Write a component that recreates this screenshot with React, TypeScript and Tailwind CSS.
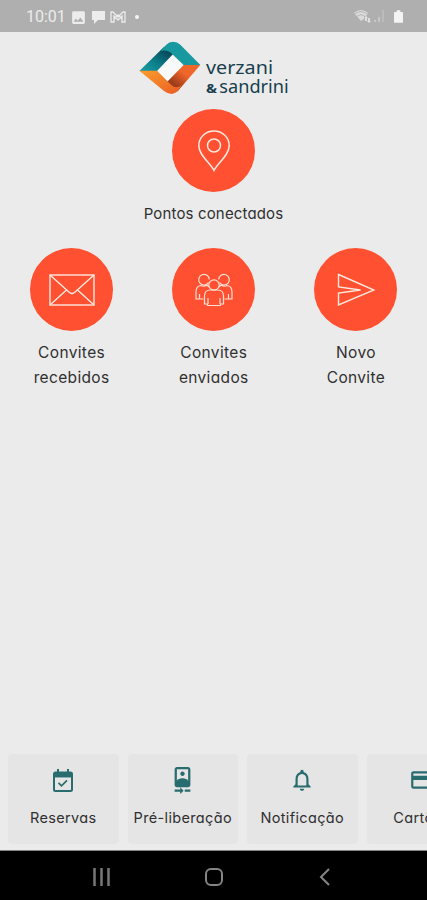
import React from "react";
import { MdImage, MdCameraFront, MdNotificationsNone, MdCreditCard } from "react-icons/md";

const PinIcon = () => (
  <svg width="32" height="42" viewBox="0 0 32 42" fill="none" stroke="#ffe9df" strokeWidth="1.500">
    <path d="M16 40.500C12.500 33 .8 25.500 .8 15.500a15.200 14.500 0 0 1 30.400 0C31.200 25.500 19.500 33 16 40.500Z" />
    <circle cx="16" cy="15.500" r="6.500" />
  </svg>
);

const MailIcon = () => (
  <svg width="46" height="32" viewBox="0 0 46 32" fill="none" stroke="#ffe9df" strokeWidth="1.400">
    <rect x="1" y="1" width="44" height="30" />
    <path d="M1 1l19.500 17.500q2.500 2 5 0L45 1M1 31l16.500-15M45 31L28.500 16" />
  </svg>
);

const PeopleIcon = () => (
  <svg width="38" height="34" viewBox="0 0 38 34" fill="none" stroke="#ffe0d4" strokeWidth="1.200">
    <path d="M13.500 9.500A5.300 5.300 0 1 1 14.300 6.500M24.500 9.500A5.300 5.300 0 1 0 23.700 6.500" />
    <circle cx="19" cy="12" r="5.200" />
    <path d="M9.500 31V23q0-6 6-6h7q6 0 6 6v8h-3v1.500h-13V31Z" />
    <path d="M8.500 26H1v-7q0-6 5-6.500 3 1.500 6-.5l2 2M29.500 26H37v-7q0-6-5-6.500-3 1.500-6-.5l-2 2" />
    <path d="M13 31v-6M25 31v-6M4.500 26v-5M33.500 26v-5" />
  </svg>
);

const SendIcon = () => (
  <svg width="38" height="34" viewBox="0 0 38 34" fill="none" stroke="#ffe9df" strokeWidth="1.400">
    <path d="M1.500 1.500L37 17 1.500 32V20l22-3-22-3Z" />
  </svg>
);

const CalendarIcon = () => (
  <svg width="20" height="23" viewBox="0 0 20 23" fill="none" stroke="currentColor" strokeWidth="2">
    <rect x="1" y="3.500" width="18" height="18.500" rx="1.500" />
    <path d="M1 6.200h18" strokeWidth="4.500" />
    <path d="M5 0v4M15 0v4" />
    <path d="M5.500 13.800l3 3 5.500-5.500" strokeWidth="1.700" />
  </svg>
);

const Logo = () => (
  <svg className="mt-1" width="170" height="66" viewBox="0 0 510 198">
    <defs>
      <linearGradient id="teal" x1="0" y1="1" x2="1" y2="0">
        <stop offset="0" stopColor="#1aa0a4" />
        <stop offset=".4" stopColor="#0d7f8a" />
        <stop offset=".8" stopColor="#07495a" />
      </linearGradient>
      <linearGradient id="orange" x1="0" y1="0" x2="1" y2="1">
        <stop offset="0" stopColor="#fb9d2c" />
        <stop offset="1" stopColor="#ea5c24" />
      </linearGradient>
      <linearGradient id="orangeDark" x1="1" y1="0" x2="0" y2="1">
        <stop offset=".4" stopColor="#f0662a" />
        <stop offset=".75" stopColor="#9e3d1b" />
      </linearGradient>
    </defs>
    <path d="M128 56L166 90 118 138 84 104Z" fill="#f8f9f9" />
    <path d="M31 105L104 34 138 48 84 105Z" fill="url(#teal)" />
    <path d="M92 46L112 26Q120 17 132 17 145 17 154 26L214 87H164L132 56Q114 38 92 46Z" fill="#18989f" />
    <path d="M214 87H164L114 138 146 166Z" fill="url(#orangeDark)" />
    <path d="M31 104H84L126 146Q140 160 158 148L146 166Q136 174 128 174 116 174 106 166Z" fill="url(#orange)" />
    <g fill="#173f4e" fontFamily="'Noto Sans', sans-serif">
      <text x="231" y="115" fontSize="52" textLength="201" lengthAdjust="spacingAndGlyphs">verzani</text>
      <text x="231" y="170" fontSize="38" fontWeight="700" textLength="33" lengthAdjust="spacingAndGlyphs">&amp;</text>
      <text x="271" y="170" fontSize="52" textLength="208" lengthAdjust="spacingAndGlyphs">sandrini</text>
    </g>
  </svg>
);

const Action = ({ icon, children }: { icon: React.ReactNode; children: React.ReactNode }) => (
  <div className="flex flex-col items-center text-center">
    <div className="flex h-[83px] w-[83px] items-center justify-center rounded-full bg-[#ff5131]">
      {icon}
    </div>
    <div className="mt-[9px] leading-[25px] whitespace-nowrap">{children}</div>
  </div>
);

const shortcuts = [
  { label: "Reservas", icon: <CalendarIcon /> },
  { label: "Pré-liberação", icon: <MdCameraFront size={27} /> },
  { label: "Notificação", icon: <MdNotificationsNone size={26} /> },
  { label: "Cartões", icon: <MdCreditCard size={26} /> },
];

const StatusBar = () => (
  <div className="flex h-8 items-center justify-between bg-[#afafaf] pr-6 pl-[26px] text-[#ececec]">
    <div className="flex items-center gap-[4px] pt-[2px]">
      <span className="w-[40px] font-['Roboto',sans-serif] text-[16px] leading-5">10:01</span>
      <MdImage size={17} />
      <svg width="15" height="13" viewBox="0 0 15 13" fill="currentColor">
        <path d="M1 0h13v9H7l-4 4V9H1Z" />
      </svg>
      <svg width="16" height="12" viewBox="0 0 16 12" fill="none" stroke="currentColor" strokeWidth="1.300">
        <path d="M1 1v10h3V5l4 4 4-4v6h3V1h-2L8 6 3 1ZM4 8l4-4 4 4" />
      </svg>
      <span className="ml-[5px] h-1 w-1 rounded-full bg-[#f4f4f4]" />
    </div>
    <div className="flex items-center gap-[3px]">
      <svg width="17" height="14" viewBox="0 0 17 14" fill="currentColor">
        <path d="M0 4Q7-2 14 4L12 7H10V10L7 12Z" opacity=".7" />
        <path d="M1 5Q7 0 13 5M3 7.500Q7 4 11 7.500" fill="none" stroke="#afafaf" strokeWidth=".8" />
        <path d="M12 7l2 2h-1v3h-2V9h-1ZM15 14l-2-2h1V9h2v3h1Z" opacity=".8" />
      </svg>
      <svg width="12" height="14" viewBox="0 0 12 14" fill="currentColor">
        <path d="M0 13h2v-2H0zM4 13h2V8H4z" opacity=".4" />
        <path d="M8 13h2V1H8z" opacity=".2" />
      </svg>
      <svg className="ml-[5px] text-[#f4f4f4]" width="9" height="13" viewBox="0 0 10 14" fill="currentColor">
        <path d="M3 0h4v2h2q1 0 1 1v10q0 1-1 1H1q-1 0-1-1V3q0-1 1-1h2Z" />
      </svg>
    </div>
  </div>
);

const App = () => {
  return (
    <div className="flex h-[900px] w-full flex-col overflow-hidden bg-[#ebebeb] font-['Inter',sans-serif] text-[#303030] [font-feature-settings:'cv11']">
      <StatusBar />

      <main className="flex flex-1 flex-col">
        <div className="flex justify-center pl-px">
          <Logo />
        </div>
        <div className="mt-[7px] flex justify-center text-[15px] tracking-[0.15px]">
          <Action icon={<PinIcon />}>Pontos conectados</Action>
        </div>
        <div className="mt-[22px] grid grid-cols-3 pl-[0.5px] text-[15.5px] tracking-[0.35px]">
          <Action icon={<MailIcon />}>
            Convites
            <br />
            recebidos
          </Action>
          <Action icon={<PeopleIcon />}>
            Convites
            <br />
            enviados
          </Action>
          <Action icon={<SendIcon />}>
            Novo
            <br />
            Convite
          </Action>
        </div>
      </main>

      <div className="flex gap-[9px] overflow-hidden pb-[6px] pl-2">
        {shortcuts.map((item) => (
          <div
            key={item.label}
            className="flex h-[90px] w-[110.5px] shrink-0 flex-col items-center rounded bg-[#e5e5e5] pt-[13px]"
          >
            <div className="flex h-[26px] items-center text-[#286c70]">{item.icon}</div>
            <span className="mt-[15px] text-[14.5px] leading-5 tracking-[0.35px] whitespace-nowrap">
              {item.label}
            </span>
          </div>
        ))}
      </div>

      <nav className="flex h-[50px] items-center justify-center gap-[93px] border-t border-[#858585] bg-black pt-[3px] pr-px">
        <svg width="20" height="18" viewBox="0 0 20 18" stroke="#777" strokeWidth="2.500">
          <path d="M2.500 0v18M9.500 0v18M16.500 0v18" />
        </svg>
        <svg width="18" height="18" viewBox="0 0 18 18" fill="none" stroke="#858585" strokeWidth="2">
          <rect x="1" y="1" width="16" height="16" rx="5" />
        </svg>
        <svg width="18" height="18" viewBox="0 0 18 18" fill="none" stroke="#858585" strokeWidth="2">
          <path d="M13 1L5 9l8 8" />
        </svg>
      </nav>
    </div>
  );
};

export default App;
